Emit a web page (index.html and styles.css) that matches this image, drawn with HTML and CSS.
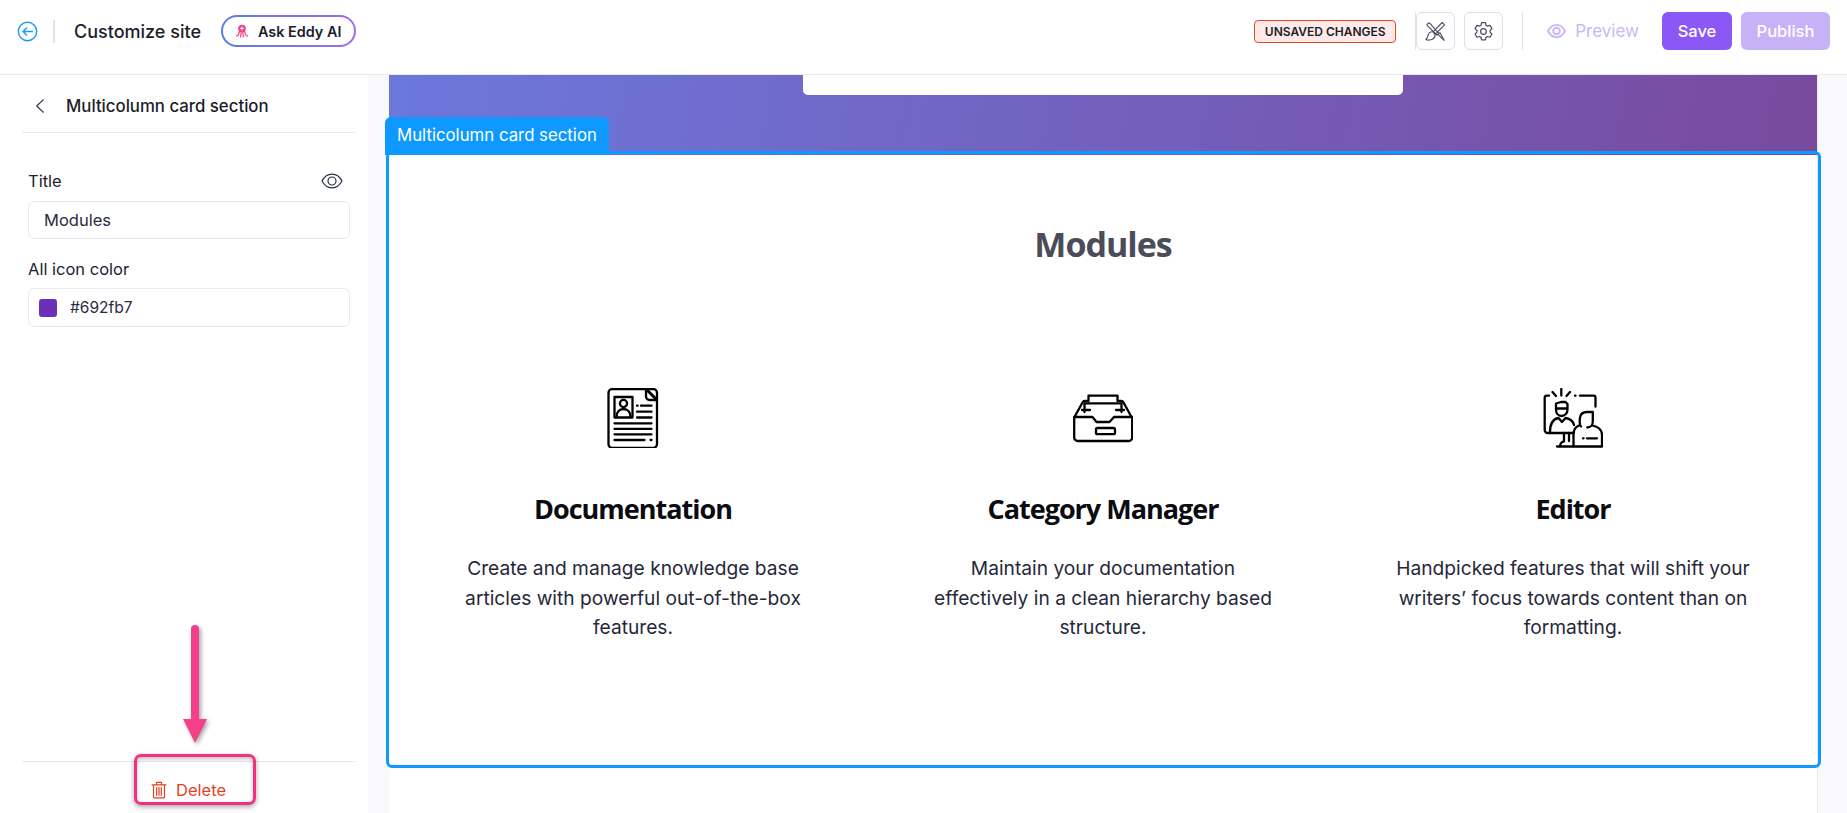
FILE: index.html
```html
<!DOCTYPE html>
<html lang="en">
<head>
<meta charset="utf-8">
<title>Customize site</title>
<link rel="stylesheet" href="styles.css">
</head>
<body>
<header class="topbar">
  <div class="topbar-left">
    <svg class="back-circle" viewBox="0 0 22 22" fill="none" stroke="#1a9bf5" stroke-width="1.5" stroke-linecap="round" stroke-linejoin="round"><circle cx="11" cy="11" r="9.6"/><path d="M16 11H6.5M10 7.3 6.3 11l3.700 3.700"/></svg>
    <span class="v-rule"></span>
    <span class="site-title">Customize site</span>
    <button class="eddy">
      <span class="eddy-inner">
        <svg class="eddy-icon" viewBox="0 0 16 16" fill="none" stroke="#f0418b" stroke-width="1.400" stroke-linecap="round">
          <circle cx="8" cy="5.200" r="4.400" fill="#f0418b" stroke="none"/>
          <path d="M8 3.200v3.600M6.200 5h3.600" stroke="#fff" stroke-width="1.100"/>
          <path d="M5 8.800 4 12c-.3 1.100-1.300 1.700-2.500 1.500M7 9.500l-.6 5.200M9 9.500l.6 5.200M11 8.800l1 3.200c.3 1.100 1.300 1.700 2.500 1.500"/>
        </svg>
        Ask Eddy AI
      </span>
    </button>
  </div>
  <div class="topbar-right">
    <span class="badge">UNSAVED CHANGES</span>
    <div class="icon-buttons">
      <button class="icon-btn">
        <svg viewBox="0 0 24 24" fill="none" stroke="#4b5068" stroke-width="1.200" stroke-linejoin="round" stroke-linecap="round">
          <path d="M3 4.800 4.800 3l1.600.8 9 10.200-1.800 1.700L4 6.300Z"/>
          <path d="M14.500 15 16.600 13.100 21 21.200Z"/>
          <path d="M19 2.600 21.400 5l-9.500 9.700-2.500-2.400Z"/>
          <path d="M9.400 12.300c-2.700-.3-4.500 1-5 3.200-.4 1.700-1 3.500-2.400 5 3.300 1 7.300.2 8.900-2.400 1.100-1.900.6-3.900-1.500-5.800Z"/>
        </svg>
      </button>
      <button class="icon-btn">
        <svg viewBox="0 0 24 24" fill="none" stroke="#4b5068" stroke-width="1.300" stroke-linejoin="round" stroke-linecap="round"><circle cx="12" cy="12" r="3"/><path d="M10 2.800h4l.6 2.700 1.500.9 2.700-.8 2 3.400-2 1.900v1.800l2 1.900-2 3.400-2.700-.8-1.500.9-.6 2.700h-4l-.6-2.700-1.500-.9-2.700.8-2-3.400 2-1.900v-1.800l-2-1.900 2-3.400 2.700.8 1.500-.9Z"/></svg>
      </button>
    </div>
    <span class="v-rule tall"></span>
    <button class="preview">
      <svg viewBox="0 0 20 16" fill="none" stroke="#cbb8f5" stroke-width="2"><path d="M1 8c2.200-4.300 5.200-6.500 9-6.500s6.800 2.200 9 6.500c-2.200 4.300-5.200 6.500-9 6.500S3.200 12.300 1 8Z"/><circle cx="10" cy="8" r="3.500"/></svg>
      Preview
    </button>
    <button class="btn save">Save</button>
    <button class="btn publish">Publish</button>
  </div>
</header>

<div class="workspace">
  <aside class="sidebar">
    <div class="side-head">
      <svg class="chevron" viewBox="0 0 12 18" fill="none" stroke="#30344a" stroke-width="1.300" stroke-linecap="round" stroke-linejoin="round"><path d="M10 1.500 2 9l8 7.500"/></svg>
      <span>Multicolumn card section</span>
    </div>
    <div class="field">
      <div class="field-label">
        <span>Title</span>
        <svg class="eye" viewBox="0 0 22 16" fill="none" stroke="#2c3048" stroke-width="1.200"><path d="M1 8c2.400-4.500 5.700-6.800 10-6.800S18.600 3.500 21 8c-2.400 4.500-5.700 6.800-10 6.800S3.400 12.500 1 8Z"/><circle cx="11" cy="8" r="4"/></svg>
      </div>
      <div class="input">Modules</div>
    </div>
    <div class="field second">
      <div class="field-label"><span>All icon color</span></div>
      <div class="input color">
        <span class="swatch"></span>
        <span class="hex">#692fb7</span>
      </div>
    </div>
    <div class="side-foot">
      <button class="delete">
        <svg viewBox="0 0 16 18" fill="none" stroke="#e5401f" stroke-width="1.200" stroke-linejoin="round" stroke-linecap="round"><path d="M1 3.800h14M5.500 3.500V1.300h5v2.200M2.500 3.800v12c0 .6.400 1 1 1h9c.6 0 1-.4 1-1v-12M5.700 6.500v7.800M8 6.500v7.800M10.300 6.500v7.800"/></svg>
        Delete
      </button>
    </div>
    <div class="callout"></div>
    <svg class="arrow" viewBox="0 0 24 118"><path d="M8 4a4 4 0 0 1 8 0v90h8l-12 24L0 94h8Z" fill="#f43f8a"/></svg>
  </aside>

  <main class="canvas">
    <div class="hero"><div class="hero-card"></div></div>
    <section class="cards">
      <div class="cards-tab">Multicolumn card section</div>
      <h2>Modules</h2>
      <div class="columns">
        <article class="col">
          <svg class="mod-icon" viewBox="0 0 60 60" fill="none" stroke="#000" stroke-width="2.300" stroke-linejoin="round" stroke-linecap="round">
            <path d="M43 1.200H9A3.500 3.500 0 0 0 5.500 4.700v51.600A3.500 3.500 0 0 0 9 59.800h41.500a3.500 3.500 0 0 0 3.500-3.500V12Z"/>
            <path d="M43 1.200h7.500A3.500 3.500 0 0 1 54 4.700V12H46.500A3.500 3.500 0 0 1 43 8.500Z" fill="#fff"/>
            <path d="M44 2 53 11" stroke-width="3"/>
            <rect x="11.500" y="9" width="18" height="20.500"/>
            <circle cx="20.500" cy="15.500" r="3.600"/>
            <path d="M13.500 29c0-5 3-8 7-8s7 3 7 8"/>
            <path d="M34 17.700h.6M38 17.700h10.500M34 23.700h14.500M34 29.500h14.500M11.500 35.300h37M11.500 40.800h37M11.500 46.300h37M11.500 52h30M47.500 52h1"/>
          </svg>
          <h3>Documentation</h3>
          <p>Create and manage knowledge base articles with powerful out-of-the-box features.</p>
        </article>
        <article class="col">
          <svg class="mod-icon" viewBox="0 0 60 60" fill="none" stroke="#000" stroke-width="2.300" stroke-linejoin="round" stroke-linecap="round">
            <path d="M1.200 29h18.300l4 5h13l4.500-5h18.200v20.500a3.500 3.500 0 0 1-3.500 3.500H4.700a3.500 3.500 0 0 1-3.500-3.500Z"/>
            <path d="M1.500 29 9.500 14.500a3 3 0 0 1 2.500-1.500h2M58.500 29 50.500 14.500a3 3 0 0 0-2.500-1.500h-2"/>
            <path d="M15.500 13V7.700h29V13M11.500 24V15.300h37V24M9 22h8M43 22h8"/>
            <rect x="23" y="40" width="19" height="6.200" rx="1.500"/>
          </svg>
          <h3>Category Manager</h3>
          <p>Maintain your documentation effectively in a clean hierarchy based structure.</p>
        </article>
        <article class="col">
          <svg class="mod-icon" viewBox="0 0 60 60" fill="none" stroke="#000" stroke-width="2.300" stroke-linejoin="round" stroke-linecap="round">
            <path d="M6 7.700H3.500A2 2 0 0 0 1.700 9.700V42a3 3 0 0 0 3 3H30M32 7.700h.5M37 7.700h13.500a2 2 0 0 1 2 2v9"/>
            <path d="M18.300 1v6.500M9.500 4 13 8M27 4l-3.500 4"/>
            <path d="M13 21.500V15.500l5-1.500h4.500l2 2v5.500M13 21.500c0 4 2.500 6.500 5.500 6.500s6-2.500 6-6.500M13 20.500h11.500"/>
            <path d="M7 44c0-9 3-13 8.500-14l3.500 4 3.500-4c5 .8 7.500 3 8.500 7"/>
            <path d="M21 45v8M26 45v8M14 58.500h16M17 58.500c0-2.500 1.500-5 4-5"/>
            <path d="M38 38.500c-1.500-1.500-1.500-5-1-9 .5-3 3-5.500 7-5.500h5.800v9.500c0 3.500-2.500 6-5.500 6"/>
            <path d="M36 37.500c-3 1.500-5.500 3-5.500 9.500v11.500h28.500V47c0-5-2.500-8-9.500-9.500"/>
            <path d="M40 50.300h.6M44 50.300h10"/>
          </svg>
          <h3>Editor</h3>
          <p>Handpicked features that will shift your writers’ focus towards content than on formatting.</p>
        </article>
      </div>
    </section>
    <div class="next-section"></div>
  </main>
</div>
</body>
</html>
```

FILE: styles.css
```css
* { box-sizing: border-box; }

html, body {
  margin: 0;
  height: 813px;
  overflow: hidden;
}

body {
  display: flex;
  flex-direction: column;
  font-family: "Inter", "Liberation Sans", sans-serif;
  color: #1f2133;
  background: #fff;
}

button {
  font: inherit;
  background: none;
  border: 0;
  padding: 0;
}

/* Top bar */
.topbar {
  flex: 0 0 75px;
  display: flex;
  align-items: center;
  justify-content: space-between;
  padding: 0 17px 12px 17px;
  border-bottom: 1px solid #e9e9ee;
}

.topbar-left, .topbar-right {
  display: flex;
  align-items: center;
}

.back-circle { width: 21px; height: 21px; }

.v-rule {
  width: 2px;
  height: 23px;
  background: #e2e2e6;
  margin: 0 19px 0 15px;
}

.site-title {
  font-size: 18px;
  font-weight: 500;
  color: #1c1d2b;
  margin-right: 20px;
}

.eddy {
  height: 32px;
  width: 135px;
  border-radius: 16px;
  padding: 2px;
  background: linear-gradient(90deg, #5a7be8, #a06ce8);
}

.eddy-inner {
  display: flex;
  align-items: center;
  height: 100%;
  border-radius: 14px;
  background: #fff;
  padding-left: 12px;
  gap: 9px;
  font-size: 14.400px;
  font-weight: 600;
  color: #1c1d2b;
}

.eddy-icon { width: 14px; height: 16px; }

.badge {
  width: 142px;
  height: 23px;
  display: flex;
  align-items: center;
  justify-content: center;
  border: 1px solid #e8442a;
  border-radius: 4px;
  background: #ffeae7;
  font-size: 12px;
  font-weight: 600;
  color: #1c1d2b;
  white-space: nowrap;
}

.icon-buttons {
  display: flex;
  gap: 9px;
  margin-left: 19px;
  border-left: 1px solid #e2e2e6;
}

.icon-btn {
  width: 39px;
  height: 38px;
  border: 1px solid #dedee3;
  border-radius: 6px;
  display: flex;
  align-items: center;
  justify-content: center;
}

.icon-btn svg { width: 23px; height: 23px; }

.topbar-right .v-rule.tall {
  width: 1px;
  height: 38px;
  margin: 0 24px 0 19px;
}

.preview {
  display: flex;
  align-items: center;
  gap: 9px;
  font-size: 17px;
  color: #cbb8f5;
  margin-right: 23px;
}

.preview svg { width: 19px; height: 16px; }

.btn {
  height: 38px;
  border-radius: 6px;
  color: #fff;
  font-size: 16.500px;
  font-weight: 500;
}

.save {
  width: 70px;
  background: #8b57f5;
  margin-right: 9px;
}

.publish {
  width: 89px;
  background: #c8b2f7;
}

/* Workspace */
.workspace {
  flex: 1;
  display: flex;
  min-height: 0;
  background: #f9f9fc;
}

.sidebar {
  position: relative;
  flex: 0 0 368px;
  display: flex;
  flex-direction: column;
  background: #fff;
  padding: 0 13px 0 22px;
}

.side-head {
  display: flex;
  align-items: center;
  height: 58px;
  border-bottom: 1px solid #e9e9ee;
  padding: 4px 0 0 13px;
  gap: 21px;
  font-size: 16.800px;
  font-weight: 500;
  color: #1c1d2b;
}

.chevron { width: 10px; height: 16px; }

.field { padding: 0 5px 0 6px; margin-top: 36px; }
.field.second { margin-top: 18px; }

.field-label {
  display: flex;
  align-items: center;
  justify-content: space-between;
  height: 24px;
  padding-right: 7px;
  font-size: 16.500px;
  color: #1f2133;
  margin-bottom: 8px;
}

.field.second .field-label { margin-bottom: 7px; }

.eye { width: 22px; height: 16px; }

.input {
  height: 38px;
  border: 1px solid #e9e9ee;
  border-radius: 6px;
  display: flex;
  align-items: center;
  padding-left: 15px;
  font-size: 16.500px;
  color: #2a2c40;
}

.input.color {
  padding-left: 10px;
  gap: 13px;
  height: 39px;
  font-size: 15.500px;
}

.swatch {
  width: 18px;
  height: 18px;
  border-radius: 3px;
  background: #692fb7;
}

.side-foot {
  margin-top: auto;
  height: 52px;
  border-top: 1px solid #e9e9ee;
  padding: 18px 0 0 129px;
}

.delete {
  display: flex;
  align-items: center;
  gap: 9px;
  font-size: 16.500px;
  color: #e5401f;
}

.delete svg { width: 16px; height: 18px; }

.callout {
  position: absolute;
  left: 134px;
  top: 679px;
  width: 122px;
  height: 51px;
  border: 3px solid #f2307f;
  border-radius: 7px;
  box-shadow: 0 2px 5px rgba(0, 0, 0, .35), inset 0 2px 4px rgba(0, 0, 0, .25);
}

.arrow {
  position: absolute;
  left: 183px;
  top: 550px;
  width: 24px;
  height: 118px;
  filter: drop-shadow(2px 2px 2px rgba(0, 0, 0, .35));
}

/* Canvas */
.canvas {
  flex: 0 0 1428px;
  margin-left: 21px;
  background: #fff;
  border-right: 1px solid #e9e9ee;
  display: flex;
  flex-direction: column;
}

.hero {
  flex: 0 0 80px;
  background: linear-gradient(100deg, #6c78dc, #794a9e);
  display: flex;
  justify-content: center;
}

.hero-card {
  width: 600px;
  height: 20px;
  background: #fff;
  border-radius: 0 0 5px 5px;
}

.cards {
  position: relative;
  flex: 0 0 612px;
  background: #fff;
  padding: 64px 9px 0;
}

.cards::before {
  content: "";
  position: absolute;
  inset: -4px -4px -1px -3px;
  border: 3px solid #0d99ff;
  border-radius: 6px;
  pointer-events: none;
}

.cards-tab {
  position: absolute;
  left: -4px;
  top: -38px;
  width: 224px;
  height: 38px;
  display: flex;
  align-items: center;
  padding: 0 0 2px 12px;
  background: #0d99ff;
  border-radius: 6px 6px 0 0;
  color: #fff;
  font-size: 16.800px;
}

.cards h2 {
  margin: 0;
  height: 50px;
  line-height: 50px;
  text-align: center;
  font-family: "Open Sans", sans-serif;
  font-size: 34px;
  font-weight: 700;
  color: #4b4c59;
  letter-spacing: -1px;
}

.columns {
  display: grid;
  grid-template-columns: repeat(3, 470px);
  margin-top: 119px;
}

.col { text-align: center; }

.mod-icon {
  display: block;
  width: 60px;
  height: 60px;
  margin: 0 auto;
}

.col h3 {
  margin: 43px 0 0;
  line-height: 36px;
  font-family: "Open Sans", sans-serif;
  font-size: 27px;
  font-weight: 700;
  color: #0b0b12;
  letter-spacing: -1px;
}

.col p {
  width: 358px;
  margin: 27px auto 0;
  font-size: 19.200px;
  line-height: 29.500px;
  color: #26283a;
}

.next-section {
  flex: 1;
  background: #fff;
}
```
